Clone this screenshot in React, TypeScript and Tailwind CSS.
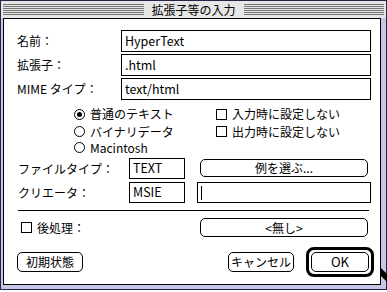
import React from 'react';

const stripes =
  'h-[12px] flex-1 bg-[image:repeating-linear-gradient(180deg,#767676_0px,#767676_1px,#e6e6e6_1px,#e6e6e6_2px)]';

const Field: React.FC<{ value?: string; className?: string; cursor?: boolean }> = ({ value, className, cursor }) => (
  <div className={`flex shrink-0 items-center border border-black bg-white px-[3px] text-[12.5px] leading-none ${className ?? ''}`}>
    {cursor && <span className="h-[14px] w-px bg-black" />}
    {value}
  </div>
);

const Radio: React.FC<{ checked?: boolean; label: string }> = ({ checked, label }) => (
  <div className="flex items-center gap-[5px]">
    <span className="flex h-[11px] w-[11px] shrink-0 items-center justify-center rounded-full border border-black">
      {checked && <span className="h-[5px] w-[5px] rounded-full bg-black" />}
    </span>
    <span>{label}</span>
  </div>
);

const Check: React.FC<{ label: string }> = ({ label }) => (
  <div className="flex items-center gap-[5px]">
    <span className="h-[11px] w-[11px] shrink-0 border border-black" />
    <span>{label}</span>
  </div>
);

const Btn: React.FC<{ label: string; className?: string }> = ({ label, className }) => (
  <div className={`flex shrink-0 items-center justify-center rounded-[5px] border border-black bg-white ${className ?? ''}`}>
    {label}
  </div>
);

export default function App() {
  return (
    <div className="relative h-[292px] w-[387px] overflow-hidden whitespace-nowrap bg-white font-['Noto_Sans_CJK_JP','Noto_Sans',sans-serif] text-[12px] text-black">
      <div className="flex h-[290px] w-full flex-col border border-[#24244a] bg-[#c6c6e6]">
        {/* title bar */}
        <div className="flex h-[17px] items-center bg-[#e6e6e6] px-[2px]">
          <div className={stripes} />
          <div className="px-[8px] text-[12px] leading-none">拡張子等の入力</div>
          <div className={stripes} />
        </div>
        <div className="mb-[4px] ml-[2px] mr-[5px] flex flex-1 flex-col border border-black bg-white">
          {/* text fields */}
          <div className="flex flex-col gap-[2px] pt-[11px]">
            {[
              ['名前：', 'HyperText'],
              ['拡張子：', '.html'],
              ['MIME タイプ：', 'text/html'],
            ].map(([label, value]) => (
              <div key={label} className="flex h-[22px] items-center">
                <span className="w-[117px] shrink-0 pl-[13px]">{label}</span>
                <Field value={value} className="h-[22px] w-[250px]" />
              </div>
            ))}
          </div>

          {/* radios + checks */}
          <div className="mt-[5px] flex">
            <div className="flex w-[212px] shrink-0 flex-col pl-[70px]">
              <div className="flex h-[18px] items-center"><Radio checked label="普通のテキスト" /></div>
              <div className="flex h-[17px] items-center"><Radio label="バイナリデータ" /></div>
              <div className="flex h-[15px] items-center"><Radio label="Macintosh" /></div>
            </div>
            <div className="flex flex-col">
              <div className="flex h-[18px] items-center"><Check label="入力時に設定しない" /></div>
              <div className="flex h-[17px] items-center"><Check label="出力時に設定しない" /></div>
            </div>
          </div>

          {/* file type / creator */}
          <div className="mt-[3px] flex h-[21px] items-start">
            <span className="flex h-[21px] w-[125px] shrink-0 items-center pl-[14px]">ファイルタイプ：</span>
            <Field value="TEXT" className="h-[21px] w-[56px]" />
            <Btn label="例を選ぶ..." className="ml-[15px] mt-px h-[18px] w-[168px]" />
          </div>
          <div className="mt-[3px] flex h-[21px] items-start">
            <span className="flex h-[21px] w-[125px] shrink-0 items-center pl-[14px]">クリエータ：</span>
            <Field value="MSIE" className="h-[21px] w-[56px]" />
            <Field cursor className="ml-[12px] h-[21px] w-[174px] px-[2px]" />
          </div>

          <div className="ml-[14px] mt-[7px] h-px w-[351px] bg-black" />

          {/* post process */}
          <div className="mt-[7px] flex h-[19px] items-center">
            <div className="w-[196px] shrink-0 pl-[17px]"><Check label="後処理：" /></div>
            <Btn label="<無し>" className="h-[19px] w-[168px]" />
          </div>

          {/* bottom buttons */}
          <div className="mt-[10px] flex h-[30px] items-center">
            <Btn label="初期状態" className="ml-[13px] h-[20px] w-[66px]" />
            <Btn label="キャンセル" className="ml-[145px] h-[20px] w-[66px]" />
            <div className="ml-[12px] flex h-[30px] w-[68px] shrink-0 items-center justify-center rounded-[8px] border-[3px] border-black">
              <Btn label="OK" className="h-[20px] w-[58px] text-[13px]" />
            </div>
          </div>
        </div>
      </div>
      {/* mouse pointer peeking at the right edge */}
      <svg className="absolute left-[381px] top-[268px]" width="6" height="16" viewBox="0 0 6 16">
        <path d="M0 0 L6 6 L6 14 L0 8 Z" fill="black" />
      </svg>
    </div>
  );
}
